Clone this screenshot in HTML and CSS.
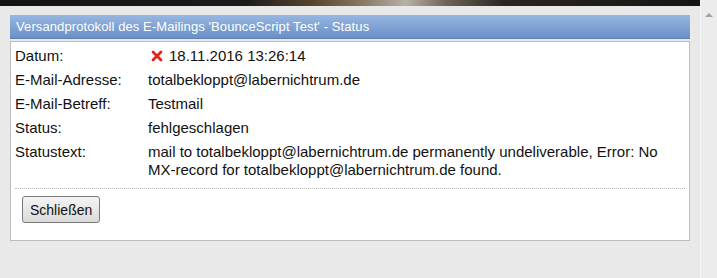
FILE: index.html
```html
<!DOCTYPE html>
<html>
<head>
    <title>Versandprotokoll</title>
    <link rel="stylesheet" href="styles.css">
</head>
<body>
    <div class="page">
        <div class="main">
            <div class="banner"></div>

            <div class="panel">
                <div class="panel-title">Versandprotokoll des E-Mailings 'BounceScript Test' - Status</div>
                <div class="panel-body">
                    <table class="details">
                        <tr>
                            <td class="label">Datum:</td>
                            <td class="value">
                                <svg class="fail-icon" width="12" height="12" viewBox="0 0 12 12">
                                    <path d="M2 2 L10 10 M10 2 L2 10" stroke="#e2231a" stroke-width="2.8" stroke-linecap="round"/>
                                </svg>18.11.2016 13:26:14
                            </td>
                        </tr>
                        <tr>
                            <td class="label">E-Mail-Adresse:</td>
                            <td class="value">totalbekloppt@labernichtrum.de</td>
                        </tr>
                        <tr>
                            <td class="label">E-Mail-Betreff:</td>
                            <td class="value">Testmail</td>
                        </tr>
                        <tr>
                            <td class="label">Status:</td>
                            <td class="value">fehlgeschlagen</td>
                        </tr>
                        <tr>
                            <td class="label">Statustext:</td>
                            <td class="value">mail to totalbekloppt@labernichtrum.de permanently undeliverable, Error: No <span class="nobreak">MX-record</span> for totalbekloppt@labernichtrum.de found.</td>
                        </tr>
                    </table>

                    <div class="actions">
                        <button class="close-btn">Schließen</button>
                    </div>
                </div>
            </div>
        </div>

        <div class="scrollbar">
            <span class="arrow-up"></span>
        </div>
    </div>
</body>
</html>
```

FILE: styles.css
```css
body {
    margin: 0;
    background: #e9e9e9;
    font-family: 'Liberation Sans', Arial, sans-serif;
    font-size: 15px;
    color: #111;
}

.page {
    display: flex;
    height: 278px;
    overflow: hidden;
}

.main {
    flex: 1;
}

.banner {
    height: 6px;
    background: linear-gradient(90deg, #141414 0%, #1c1b19 35%, #5a4630 45%, #8a7a66 52%, #b8b0a8 58%, #6d6152 64%, #2a2622 72%, #161513 100%);
}

.panel {
    margin: 9px 10px 0 10px;
}

.panel-title {
    height: 23px;
    line-height: 23px;
    padding-left: 6px;
    font-size: 13px;
    letter-spacing: 0.1px;
    color: #fff;
    background: linear-gradient(#97b7e3, #6b90c5);
    border-bottom: 1px solid #5a80b6;
    margin-bottom: 2px;
}

.panel-body {
    background: #fff;
    border: 1px solid #bdbdbd;
    padding: 2px 4px 17px 0;
}

.details {
    border-collapse: collapse;
    width: 100%;
}

.details td {
    padding: 3px 4px;
    line-height: 18px;
    vertical-align: top;
}

.details td.label {
    width: 125px;
}

.nobreak {
    white-space: nowrap;
}

.fail-icon {
    vertical-align: -1px;
    margin: 0 6px 0 3px;
}

.actions {
    margin: 6px 0 0 4px;
    padding-top: 7px;
    border-top: 1px dotted #b4b4b4;
}

.close-btn {
    margin-left: 7px;
    height: 27px;
    padding: 0 7px;
    font-family: 'Liberation Sans', Arial, sans-serif;
    font-size: 14px;
    color: #111;
    background: linear-gradient(#f4f4f4, #dadada);
    border: 1px solid #7a7a7a;
    border-radius: 3px;
}

.scrollbar {
    width: 16px;
    background: #ececec;
    border-left: 1px solid #f7f7f7;
    display: flex;
    justify-content: center;
}

.arrow-up {
    margin-top: 13px;
    width: 0;
    height: 0;
    border-left: 4px solid transparent;
    border-right: 4px solid transparent;
    border-bottom: 4px solid #a3a3a3;
}
```
